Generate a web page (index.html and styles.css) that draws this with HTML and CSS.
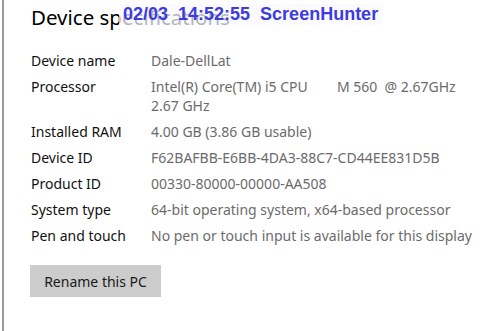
FILE: index.html
```html
<!DOCTYPE html>
<html lang="en">
<head>
<meta charset="UTF-8">
<meta name="viewport" content="width=device-width, initial-scale=1.0">
<title>Device specifications</title>
<link rel="stylesheet" href="styles.css">
</head>
<body>

<div class="panel">
  <h1>Device specifications</h1>

  <dl class="specs">
    <dt>Device name</dt>
    <dd>Dale-DellLat</dd>
    <dt>Processor</dt>
    <dd>Intel(R) Core(TM) i5 CPU&nbsp;&nbsp;&nbsp;&nbsp;&nbsp;&nbsp;&nbsp;&nbsp;M 560&nbsp; @ 2.67GHz<br>2.67 GHz</dd>
    <dt>Installed RAM</dt>
    <dd>4.00 GB (3.86 GB usable)</dd>
    <dt>Device ID</dt>
    <dd>F62BAFBB-E6BB-4DA3-88C7-CD44EE831D5B</dd>
    <dt>Product ID</dt>
    <dd>00330-80000-00000-AA508</dd>
    <dt>System type</dt>
    <dd>64-bit operating system, x64-based processor</dd>
    <dt>Pen and touch</dt>
    <dd>No pen or touch input is available for this display</dd>
  </dl>

  <button class="rename">Rename this PC</button>
</div>

<!-- capture tool stamp -->
<div class="stamp">02/03&nbsp; 14:52:55&nbsp; ScreenHunter</div>

</body>
</html>
```

FILE: styles.css
```css
body {
  margin: 0;
  background: #fff;
  font-family: "Noto Sans", "Open Sans", sans-serif;
  height: 331px;
  overflow: hidden;
}
.panel {
  margin-left: 2px;
  border-left: 2px solid #9a9a9a;
  height: 331px;
  padding: 4px 0 0 25px;
  box-sizing: border-box;
}
h1 {
  margin: 0 0 0 2px;
  font-size: 20.5px;
  font-weight: 400;
  line-height: 26px;
  color: #000;
}
.specs {
  display: grid;
  grid-template-columns: 120px 1fr;
  row-gap: 7px;
  margin: 21px 0 0 2px;
  font-size: 14px;
  line-height: 19px;
}
.specs dt {
  color: #111;
}
.specs dd {
  margin: 0;
  color: #6b6b6b;
  white-space: nowrap;
}
.rename {
  margin-top: 20px;
  margin-left: 1px;
  width: 131px;
  height: 32px;
  padding: 0;
  border: none;
  background: #cccccc;
  color: #1a1a1a;
  font-family: inherit;
  font-size: 14px;
}
.stamp {
  position: absolute;
  left: 119px;
  top: 4px;
  width: 264px;
  height: 21px;
  padding-left: 4px;
  box-sizing: border-box;
  background: rgba(250, 250, 255, 0.72);
  color: #3c3ce0;
  font-family: "Liberation Sans", Arial, sans-serif;
  font-weight: bold;
  font-size: 18px;
  line-height: 21px;
  white-space: pre;
}
```
